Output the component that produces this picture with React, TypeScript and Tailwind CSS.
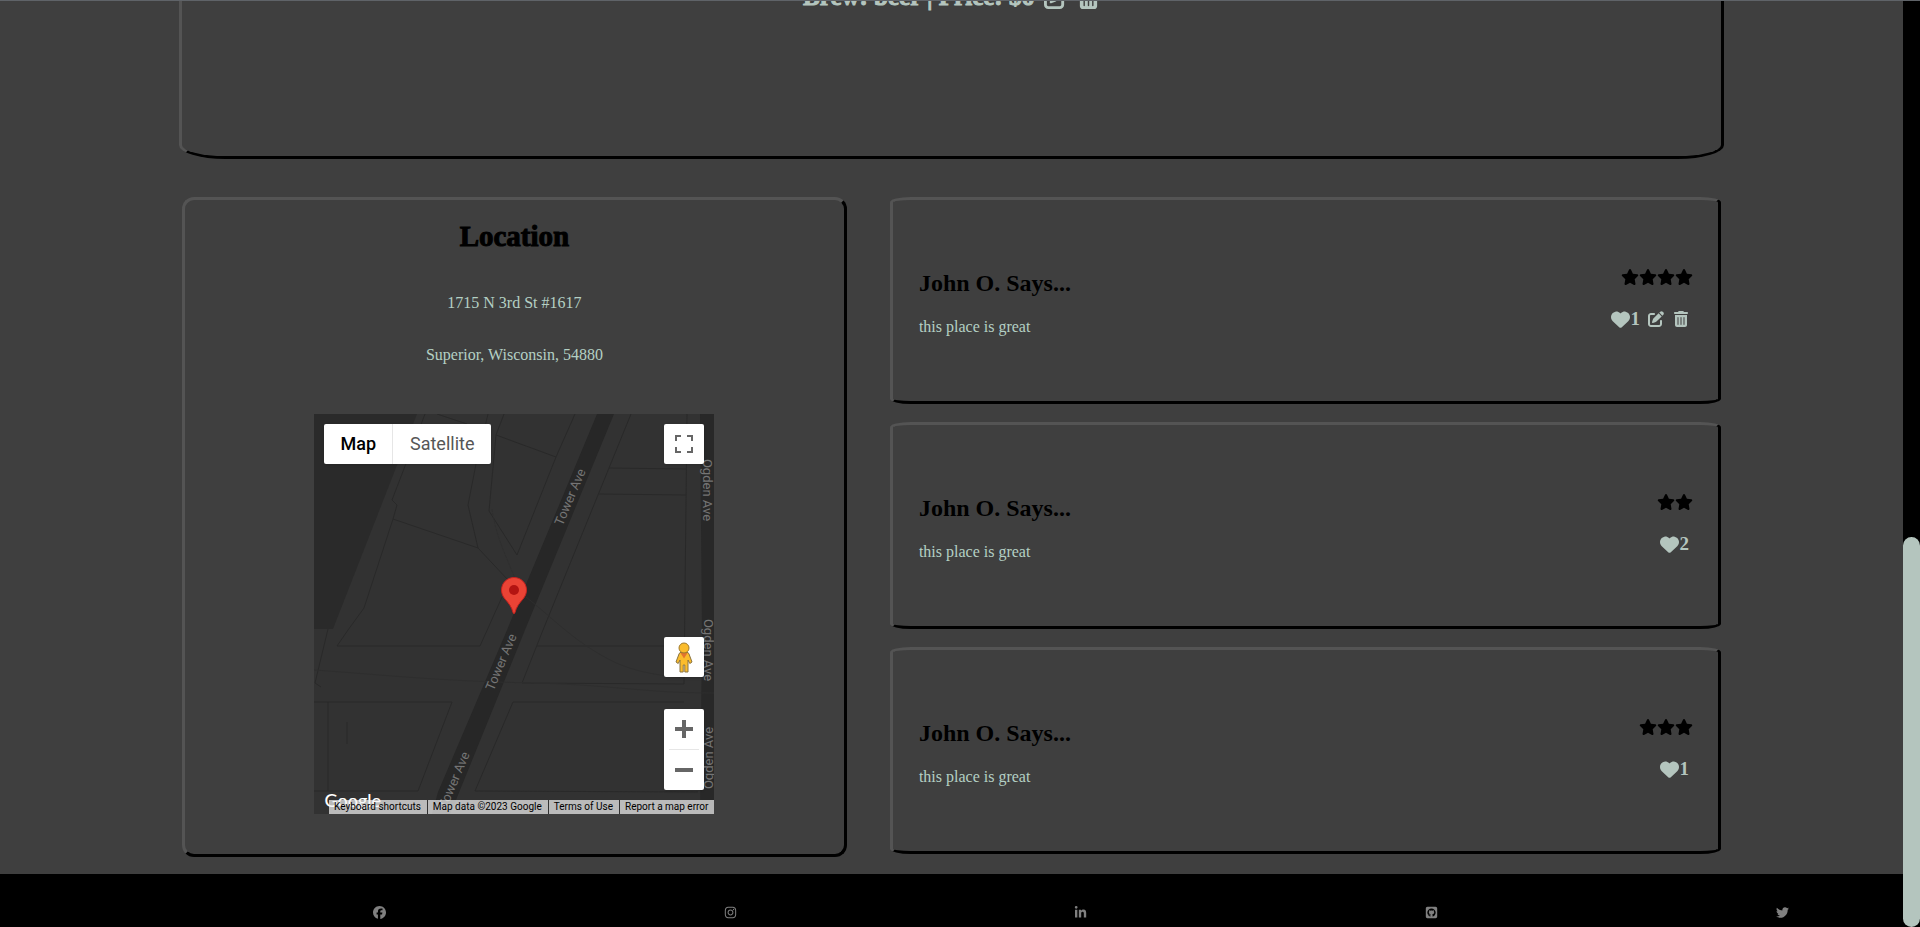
import React from "react";
import {
  FaFacebook,
  FaHeart,
  FaInstagram,
  FaLinkedinIn,
  FaPenToSquare,
  FaSquareGithub,
  FaStar,
  FaTrashCan,
  FaTwitter,
} from "react-icons/fa6";

const serif = "font-['Liberation_Serif',serif]";
const card = "border-[3px] border-t-[#545454] border-l-[#545454] border-r-black border-b-black";

interface Review {
  id: number;
  author: string;
  text: string;
  stars: number;
  likes: number;
  own: boolean;
}

const reviews: Review[] = [
  { id: 1, author: "John O.", text: "this place is great", stars: 4, likes: 1, own: true },
  { id: 2, author: "John O.", text: "this place is great", stars: 2, likes: 2, own: false },
  { id: 3, author: "John O.", text: "this place is great", stars: 3, likes: 1, own: false },
];

const socials = [
  { label: "Facebook", Icon: FaFacebook },
  { label: "Instagram", Icon: FaInstagram },
  { label: "LinkedIn", Icon: FaLinkedinIn },
  { label: "GitHub", Icon: FaSquareGithub },
  { label: "Twitter", Icon: FaTwitter },
];

function BrewCard() {
  return (
    <section className={`${card} -mt-[311px] flex h-[470px] flex-col items-center rounded-[3%] pt-[289px]`}>
      <h2 className="flex items-center gap-[10px] text-[25px] leading-8 font-bold text-[#b4c5be]">
        <span className="[-webkit-text-stroke:1px_#b4c5be]">Brew: beer | Price: $6</span>
        <button type="button" aria-label="Edit brew">
          <FaPenToSquare size={23} />
        </button>
        <button type="button" aria-label="Delete brew">
          <FaTrashCan size={23} />
        </button>
      </h2>
    </section>
  );
}

function MapDrawing() {
  return (
    <svg viewBox="0 0 400 400" className="block size-full" aria-hidden="true">
      <rect width="400" height="400" fill="#323232" />
      <path d="M0 0H103L19 215H0Z" fill="#2a2a2a" />
      <path d="M283 0H300L211 216L142 386L136 400H118L124 378L193 216Z" fill="#272727" />
      <path d="M386 0H400V400H386L388 220Z" fill="#282828" />
      <g fill="none" stroke="#292929" strokeWidth="1">
        <path d="M111 0L78 86L83 91L79 105L50 194L34 216L23 232H166L188 183" />
        <path d="M79 105L164 134L194 166" />
        <path d="M174 0L162 50L154 91L164 134" />
        <path d="M190 0L182 21L242 43L203 141L175 97L182 21" />
        <path d="M261 0L242 43M123 0L153 10" />
        <path d="M317 0L229 216L208 269L370 270L373 0" />
        <path d="M223 232H370M295 54L372 55M285 80L372 81" />
        <path d="M0 288H138L104 377H0" />
        <path d="M370 288H199L161 377L384 378" />
        <path d="M14 215L1 269L7 273" />
        <path d="M14 288V377M33 308V330" />
      </g>
      <g fill="none" stroke="#2e2e2e" strokeWidth="1">
        <path d="M0 256C60 260 120 267 220 269C300 271 330 279 400 279" />
        <path d="M212 183C240 205 260 228 300 248C320 257 340 261 370 264" />
        <path d="M178 95C182 125 196 150 203 170" strokeDasharray="3 1" />
      </g>
      <g
        fill="#757575"
        fontSize="13"
        fontFamily="Roboto, sans-serif"
        textAnchor="middle"
        dominantBaseline="central"
      >
        <text transform="translate(256 83) rotate(-67)">Tower Ave</text>
        <text transform="translate(187 248) rotate(-67)">Tower Ave</text>
        <text transform="translate(140 366) rotate(-67)">Tower Ave</text>
        <text transform="translate(393 76) rotate(90)">Ogden Ave</text>
        <text transform="translate(394 236) rotate(90)">Ogden Ave</text>
        <text transform="translate(394 344) rotate(-90)">Ogden Ave</text>
      </g>
      <g transform="translate(187 163)">
        <path
          d="M13 .5C6 .5 .5 6 .5 13C.5 16.500 1.800 19.300 4 22C7.500 26 10.800 30 12 35.500C12.200 37 13.800 37 14 35.500C15.200 30 18.500 26 22 22C24.200 19.300 25.500 16.500 25.500 13C25.500 6 20 .5 13 .5Z"
          fill="#ea4335"
          stroke="#c5221f"
          strokeWidth="1"
        />
        <circle cx="13" cy="13" r="5" fill="#b31412" />
      </g>
    </svg>
  );
}

function Pegman() {
  return (
    <svg width="18" height="31" viewBox="0 0 18 31" aria-hidden="true">
      <path
        d="M5 10.500H13L14 12L17 20L14.800 21.500L13 18V30H9.800V23H8.200V30H5V18L3.200 21.500L1 20L4 12Z"
        fill="#fbbc2c"
        stroke="#8a7440"
        strokeWidth="1"
        strokeLinejoin="round"
      />
      <path d="M5.500 11H12.500L9 16.500Z" fill="#e3742f" />
      <circle cx="9" cy="6" r="5" fill="#fbbc2c" stroke="#a07a2c" strokeWidth="1" />
    </svg>
  );
}

function MapPanel() {
  const control = "absolute right-[10px] flex w-10 items-center justify-center rounded-xs bg-white shadow-sm";
  const legal = "bg-[#f5f5f5]/70 pr-[6px] pl-[5px] text-black";
  return (
    <div className="relative size-[400px] overflow-hidden font-[Roboto,sans-serif]">
      <MapDrawing />
      <div className="absolute top-[10px] left-[10px] flex h-10 rounded-xs bg-white text-lg shadow-sm">
        <button type="button" className="border-r border-[#e6e6e6] px-4 font-medium text-black">
          Map
        </button>
        <button type="button" className="px-[17px] text-[#565656]">
          Satellite
        </button>
      </div>
      <button type="button" aria-label="Toggle fullscreen view" className={`${control} top-[10px] h-10`}>
        <svg width="18" height="18" viewBox="0 0 18 18" fill="#666" aria-hidden="true">
          <path d="M0 0V6H2V2H6V0ZM16 0H12V2H16V6H18V0ZM16 16H12V18H18V12H16ZM2 12H0V18H6V16H2Z" />
        </svg>
      </button>
      <button type="button" aria-label="Open Street View" className={`${control} top-[223px] h-10`}>
        <Pegman />
      </button>
      <div className={`${control} top-[295px] flex-col`}>
        <button type="button" aria-label="Zoom in" className="flex h-10 w-full items-center justify-center">
          <svg width="18" height="18" viewBox="0 0 18 18" fill="#666" aria-hidden="true">
            <path d="M18 7H11V0H7V7H0V11H7V18H11V11H18Z" />
          </svg>
        </button>
        <div className="h-px w-[30px] bg-[#e6e6e6]" />
        <button type="button" aria-label="Zoom out" className="flex h-10 w-full items-center justify-center">
          <svg width="18" height="18" viewBox="0 0 18 18" fill="#666" aria-hidden="true">
            <path d="M0 7H18V11H0Z" />
          </svg>
        </button>
      </div>
      <a
        href="#google"
        className="absolute bottom-0 left-[10px] font-['Lato',sans-serif] text-lg leading-7 font-medium text-white"
      >
        Google
      </a>
      <div className="absolute right-0 bottom-0 flex gap-px text-[10px] leading-[14px]">
        <button type="button" className={legal}>
          Keyboard shortcuts
        </button>
        <span className={legal}>Map data ©2023 Google</span>
        <a href="#terms" className={legal}>
          Terms of Use
        </a>
        <a href="#report" className={legal}>
          Report a map error
        </a>
      </div>
    </div>
  );
}

function LocationCard() {
  return (
    <section className={`${card} flex flex-col items-center rounded-xl pt-4 pb-10`}>
      <h2 className="text-[29px] leading-10 font-bold text-black [-webkit-text-stroke:1px_black]">Location</h2>
      <p className="mt-[35px] text-base leading-6 text-[#b4d0c4]">1715 N 3rd St #1617</p>
      <p className="mt-7 mb-[47px] text-base leading-6 text-[#b4d0c4]">Superior, Wisconsin, 54880</p>
      <MapPanel />
    </section>
  );
}

function ReviewCard({ review }: { review: Review }) {
  return (
    <article className={`${card} flex h-[207px] items-center justify-between rounded-[2.5%] pt-[5px] pr-[25px] pl-[26px]`}>
      <div>
        <h3 className="text-2xl leading-8 font-bold text-black">{review.author} Says...</h3>
        <p className="mt-4 text-base leading-6 text-[#b4d0c4]">{review.text}</p>
      </div>
      <div className="-mt-2 flex flex-col items-end gap-6">
        <div className="flex" role="img" aria-label={`${review.stars} stars`}>
          {Array.from({ length: review.stars }, (_, i) => (
            <FaStar key={i} className="h-4 w-[18px] text-black" />
          ))}
        </div>
        <div className="flex items-center gap-2 pr-1 text-[#b4c5be]">
          <button
            type="button"
            aria-label="Like review"
            className="flex items-center gap-px text-[19px] leading-5 font-bold"
          >
            <FaHeart />
            <span>{review.likes}</span>
          </button>
          {review.own && (
            <>
              <button type="button" aria-label="Edit review" className="w-[17px]">
                <FaPenToSquare size={16} />
              </button>
              <button type="button" aria-label="Delete review">
                <FaTrashCan size={16} />
              </button>
            </>
          )}
        </div>
      </div>
    </article>
  );
}

export default function App() {
  return (
    <div className={`${serif} flex h-screen overflow-hidden bg-[#3f3f3f]`}>
      <div className="flex min-w-0 flex-1 flex-col">
        <main className="px-[179px] pb-[17px]">
          <BrewCard />
          <div className="mt-[38px] grid grid-cols-[4fr_5fr] items-start gap-[43px] px-[3px]">
            <LocationCard />
            <div className="flex flex-col gap-[18px]">
              {reviews.map((review) => (
                <ReviewCard key={review.id} review={review} />
              ))}
            </div>
          </div>
        </main>
        <footer className="flex flex-1 items-start justify-between bg-black pt-8 pr-[6%] pl-[373px]">
          {socials.map(({ label, Icon }) => (
            <a key={label} href={`#${label.toLowerCase()}`} aria-label={label} className="text-[#808080]">
              <Icon size={13} />
            </a>
          ))}
        </footer>
      </div>
      <div className="flex w-[17px] flex-col justify-end bg-black">
        <div className="h-[390px] rounded-full bg-[#b4c5be]" />
      </div>
      <div className="absolute inset-x-0 top-0 h-px bg-[#5f6368]" />
    </div>
  );
}
